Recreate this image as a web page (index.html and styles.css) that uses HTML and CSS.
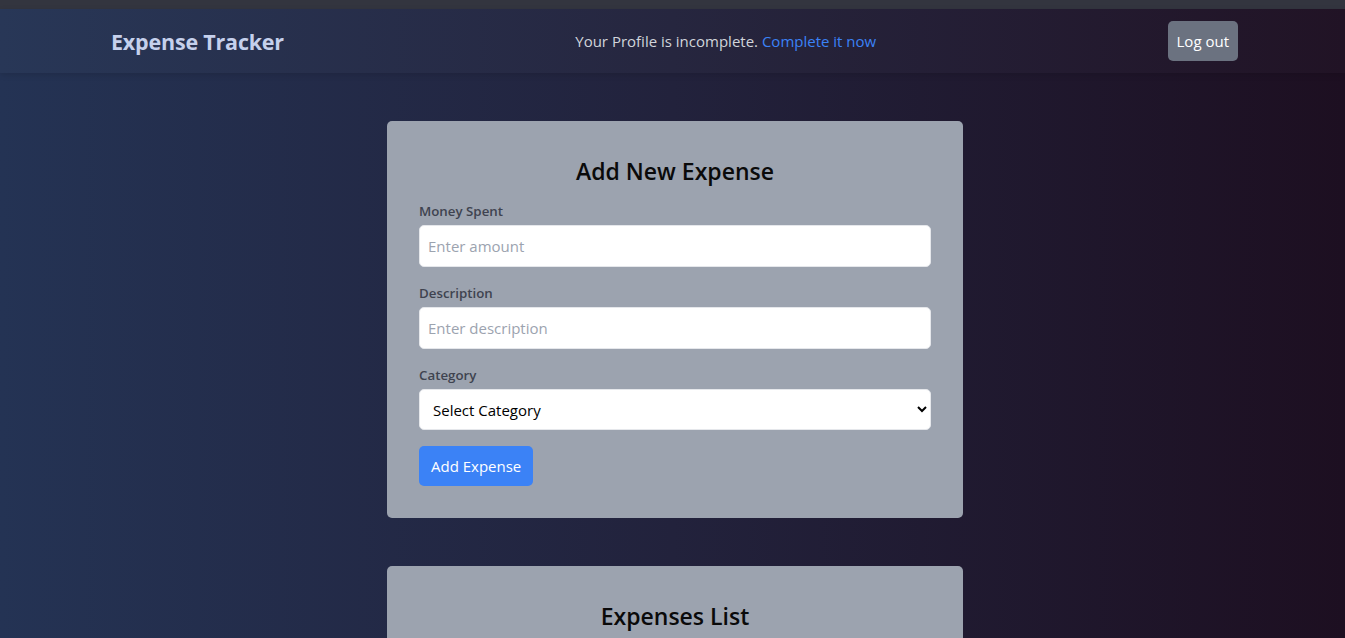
FILE: index.html
```html
<!DOCTYPE html>
<html lang="en">
<head>
<meta charset="utf-8">
<title>Expense Tracker</title>
<link rel="stylesheet" href="styles.css">
</head>
<body>
<div class="topstrip"></div>
<div class="app">
  <header class="navbar">
    <div class="brand">Expense Tracker</div>
    <div class="notice">Your Profile is incomplete. <a href="#" class="link">Complete it now</a></div>
    <button class="logout">Log out</button>
  </header>
  <main class="main">
    <section class="card">
      <h2 class="card-title">Add New Expense</h2>
      <form class="form">
        <label class="field">
          <span class="label">Money Spent</span>
          <input class="input" type="number" placeholder="Enter amount">
        </label>
        <label class="field">
          <span class="label">Description</span>
          <input class="input" type="text" placeholder="Enter description">
        </label>
        <label class="field">
          <span class="label">Category</span>
          <select class="input select">
            <option>Select Category</option>
          </select>
        </label>
        <div class="actions"><button type="button" class="btn-primary">Add Expense</button></div>
      </form>
    </section>
    <section class="card card-list">
      <h2 class="card-title">Expenses List</h2>
    </section>
  </main>
</div>
</body>
</html>
```
FILE: styles.css
```css
* { box-sizing: border-box; }
html, body { margin: 0; padding: 0; height: 100%; overflow: hidden; }
body {
  font-family: "Open Sans", "Noto Sans", sans-serif;
  background: linear-gradient(to right, #243354 0%, #22223c 50%, #1d0f21 100%);
  color: #111;
}
.topstrip { height: 9px; background: #33353f; }
.navbar {
  height: 64px;
  display: flex;
  align-items: center;
  justify-content: space-between;
  padding: 0 107px 0 111px;
  background: rgba(255,255,255,0.02);
  box-shadow: 0 2px 6px rgba(0,0,0,0.12);
}
.brand { font-size: 21.5px; font-weight: 700; color: #c5d0ec; letter-spacing: -0.2px; }
.notice { font-size: 15px; color: #d1d5db; }
.link { color: #3b82f6; text-decoration: none; }
.logout {
  font-family: inherit;
  font-size: 15px;
  color: #fff;
  background: #6b7280;
  border: none;
  border-radius: 5px;
  height: 40px;
  padding: 0 9px;
}
.main { display: flex; flex-direction: column; align-items: center; padding-top: 48px; gap: 48px; padding-left: 5px; }
.card {
  width: 576px;
  background: #9ca3af;
  border-radius: 5px;
  padding: 34px 32px 32px;
}
.card-title { margin: 0 0 15px; text-align: center; font-size: 23px; font-weight: 600; color: #0a0a0a; line-height: 32px; }
.form { display: flex; flex-direction: column; gap: 17px; }
.field { display: flex; flex-direction: column; gap: 5px; }
.label { font-size: 13.3px; font-weight: 600; color: #3f4350; line-height: 18px; }
.input {
  height: 42px;
  width: 100%;
  border: 1px solid #e5e7eb;
  border-radius: 5px;
  background: #fff;
  padding: 0 8px;
  font-family: inherit;
  font-size: 15px;
  color: #111;
}
.input::placeholder { color: #9ca3af; }
.select { height: 41px; padding: 0 8px 0 9px; color: #000; }
.actions { margin-top: -1px; }
.btn-primary {
  font-family: inherit;
  font-size: 15px;
  color: #fff;
  background: #3b82f6;
  border: none;
  border-radius: 5px;
  height: 40px;
  padding: 0 12px;
}
.card-list { height: 120px; padding-top: 34px; }
```
